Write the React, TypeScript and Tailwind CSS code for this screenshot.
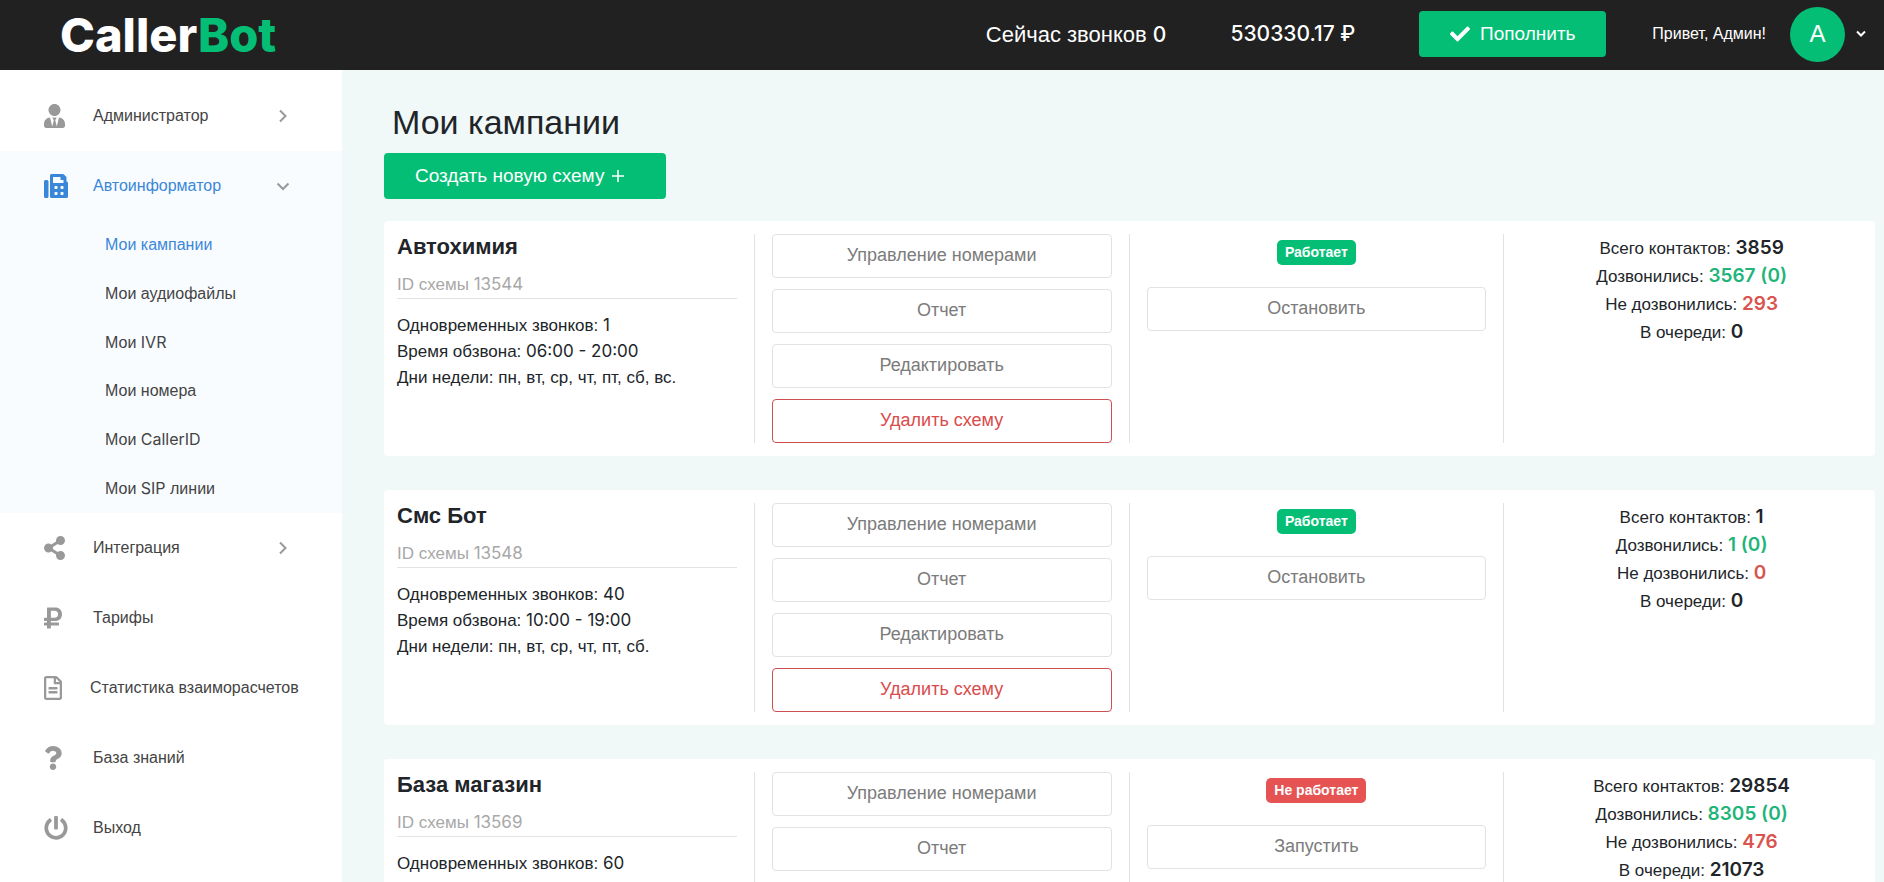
import type { ReactNode } from "react";
import {
  FaCheck,
  FaFax,
  FaPowerOff,
  FaQuestion,
  FaRegFileAlt,
  FaRubleSign,
  FaShareAlt,
  FaUserTie,
} from "react-icons/fa";

type Campaign = {
  name: string;
  id: string;
  calls: string;
  hours: string;
  days: string;
  running: boolean;
  total: string;
  reached: string;
  missed: string;
  queued: string;
};

const campaigns: Campaign[] = [
  {
    name: "Автохимия",
    id: "13544",
    calls: "1",
    hours: "06:00 - 20:00",
    days: "пн, вт, ср, чт, пт, сб, вс.",
    running: true,
    total: "3859",
    reached: "3567 (0)",
    missed: "293",
    queued: "0",
  },
  {
    name: "Смс Бот",
    id: "13548",
    calls: "40",
    hours: "10:00 - 19:00",
    days: "пн, вт, ср, чт, пт, сб.",
    running: true,
    total: "1",
    reached: "1 (0)",
    missed: "0",
    queued: "0",
  },
  {
    name: "База магазин",
    id: "13569",
    calls: "60",
    hours: "10:00 - 19:00",
    days: "пн, вт, ср, чт, пт, сб.",
    running: false,
    total: "29854",
    reached: "8305 (0)",
    missed: "476",
    queued: "21073",
  },
];

const submenu: { label: string; latin?: string; tail?: string }[] = [
  { label: "Мои кампании" },
  { label: "Мои аудиофайлы" },
  { label: "Мои ", latin: "IVR" },
  { label: "Мои номера" },
  { label: "Мои ", latin: "CallerID" },
  { label: "Мои ", latin: "SIP", tail: " линии" },
];

function Latin({ children }: { children: ReactNode }) {
  return <span className="font-['Inter',sans-serif] leading-none">{children}</span>;
}

function Chevron({ open = false }: { open?: boolean }) {
  return (
    <svg viewBox="0 0 14 14" className="ml-auto size-[14px] shrink-0 text-[#999]" fill="none" stroke="currentColor" strokeWidth="2">
      {open ? <path d="M1.5 4.5 7 10l5.5-5.5" /> : <path d="M4 1.5 9.5 7 4 12.5" />}
    </svg>
  );
}

function NavItem({
  icon,
  label,
  wide = false,
  chevron,
  active = false,
}: {
  icon: ReactNode;
  label: string;
  wide?: boolean;
  chevron?: "right" | "down";
  active?: boolean;
}) {
  return (
    <a
      href="#"
      className={`flex h-[70px] items-center pr-[52px] pl-11 ${active ? "text-[#3a87d9]" : "text-[#444]"}`}
    >
      <span className={`flex shrink-0 text-2xl ${wide ? "w-[46px]" : "w-[49px]"} ${active ? "" : "text-[#999]"}`}>{icon}</span>
      <span className="whitespace-nowrap">{label}</span>
      {chevron && <Chevron open={chevron === "down"} />}
    </a>
  );
}

function OutlineButton({ children, danger = false }: { children: ReactNode; danger?: boolean }) {
  return (
    <button
      type="button"
      className={`h-11 w-full rounded border bg-white pb-[2px] text-lg ${
        danger ? "border-[#cf5050] text-[#d94c4c]" : "border-[#e2e2e2] text-[#7b7b7b]"
      }`}
    >
      {children}
    </button>
  );
}

function Stat({ label, value, tone }: { label: string; value: string; tone: string }) {
  return (
    <p>
      {label}: <strong className={`font-['Inter',sans-serif] text-[19px] leading-none font-semibold ${tone}`}>{value}</strong>
    </p>
  );
}

function CampaignCard({ c }: { c: Campaign }) {
  return (
    <article className="rounded bg-white py-[13px]">
      <div className="-mx-1 grid grid-cols-4">
        <div className="border-r border-[#e2e2e2] px-[17px] text-[17px] leading-[26px]">
          <h2 className="text-[22px] font-bold">{c.name}</h2>
          <p className="mt-3 border-b border-[#e2e2e2] text-[#a8a8a8]">
            ID схемы <Latin>{c.id}</Latin>
          </p>
          <div className="mt-[14px]">
            <p>
              Одновременных звонков: <Latin>{c.calls}</Latin>
            </p>
            <p>
              Время обзвона: <Latin>{c.hours}</Latin>
            </p>
            <p>Дни недели: {c.days}</p>
          </div>
        </div>
        <div className="flex flex-col gap-[11px] border-r border-[#e2e2e2] px-[17px]">
          <OutlineButton>Управление номерами</OutlineButton>
          <OutlineButton>Отчет</OutlineButton>
          <OutlineButton>Редактировать</OutlineButton>
          <OutlineButton danger>Удалить схему</OutlineButton>
        </div>
        <div className="flex flex-col items-center border-r border-[#e2e2e2] px-[17px] pt-[6px]">
          <span
            className={`mb-[22px] rounded-[5px] px-2 text-sm leading-[25px] font-bold text-white ${
              c.running ? "bg-[#04be76]" : "bg-[#e55353]"
            }`}
          >
            {c.running ? "Работает" : "Не работает"}
          </span>
          <OutlineButton>{c.running ? "Остановить" : "Запустить"}</OutlineButton>
        </div>
        <div className="px-[17px] pt-px text-center text-[17px] leading-7">
          <Stat label="Всего контактов" value={c.total} tone="text-[#212529]" />
          <Stat label="Дозвонились" value={c.reached} tone="text-[#1fb57a]" />
          <Stat label="Не дозвонились" value={c.missed} tone="text-[#d9534f]" />
          <Stat label="В очереди" value={c.queued} tone="text-[#212529]" />
        </div>
      </div>
    </article>
  );
}

export default function App() {
  return (
    <div className="flex h-screen flex-col bg-[#f0f9f8] font-['Liberation_Sans',Arial,sans-serif] text-[#212529]">
      <header className="flex h-[70px] shrink-0 items-center bg-[#212121] pr-[18px] pb-[2px] pl-[60px] text-white">
        <a href="#" className="font-['Inter',sans-serif] text-[47px] leading-none font-extrabold">
          Caller<span className="text-[#04be76]">Bot</span>
        </a>
        <p className="ml-auto text-[22px] whitespace-nowrap">
          Сейчас звонков <span className="font-['Inter',sans-serif] text-[21px] font-medium">0</span>
        </p>
        <p className="ml-16 font-['Inter',sans-serif] text-[21px] font-medium whitespace-nowrap">530330.17 ₽</p>
        <button type="button" className="ml-16 flex h-[46px] w-[187px] items-center justify-center gap-[10px] rounded bg-[#04be76] text-[19px]">
          <FaCheck className="size-5" />
          Пополнить
        </button>
        <p className="ml-[46px] whitespace-nowrap">Привет, Админ!</p>
        <button type="button" className="ml-6 flex items-center gap-[11px]">
          <span className="flex size-[55px] items-center justify-center rounded-full bg-[#04be76] text-2xl">A</span>
          <svg viewBox="0 0 10 8" className="h-2 w-[10px]" fill="none" stroke="currentColor" strokeWidth="2">
            <path d="m1 1.5 4 4 4-4" />
          </svg>
        </button>
      </header>

      <div className="flex min-h-0 flex-1">
        <nav className="w-[342px] shrink-0 overflow-y-auto bg-white pt-[11px] [scrollbar-width:none]">
          <NavItem icon={<FaUserTie preserveAspectRatio="xMinYMid meet" />} label="Администратор" chevron="right" />
          <div className="bg-[#f9fcff]">
            <NavItem icon={<FaFax />} label="Автоинформатор" chevron="down" active />
            <ul className="flex h-[292px] flex-col">
              {submenu.map((s, i) => (
                <li key={i} className="flex flex-1 items-center pl-[105px]">
                  <a href="#" className={i === 0 ? "text-[#3a87d9]" : "text-[#444]"}>
                    {s.label}
                    {s.latin && <Latin>{s.latin}</Latin>}
                    {s.tail}
                  </a>
                </li>
              ))}
            </ul>
          </div>
          <NavItem icon={<FaShareAlt preserveAspectRatio="xMinYMid meet" />} label="Интеграция" chevron="right" />
          <NavItem icon={<FaRubleSign preserveAspectRatio="xMinYMid meet" />} label="Тарифы" />
          <NavItem icon={<FaRegFileAlt preserveAspectRatio="xMinYMid meet" />} label="Статистика взаиморасчетов" wide />
          <NavItem icon={<FaQuestion preserveAspectRatio="xMinYMid meet" />} label="База знаний" />
          <NavItem icon={<FaPowerOff />} label="Выход" />
        </nav>

        <main className="min-w-0 flex-1 overflow-y-auto pt-8 pr-[9px] pl-[42px] [scrollbar-width:none]">
          <h1 className="pl-2 text-[34px] leading-10">Мои кампании</h1>
          <button type="button" className="mt-[11px] flex h-[46px] w-[282px] items-center gap-2 rounded bg-[#04be76] pl-[31px] text-[19px] text-white">
            Создать новую схему
            <svg viewBox="0 0 12 12" className="size-3" stroke="currentColor" strokeWidth="1.6">
              <path d="M6 0v12M0 6h12" />
            </svg>
          </button>
          <div className="mt-[22px] flex flex-col gap-[34px] pb-[34px]">
            {campaigns.map((c) => (
              <CampaignCard key={c.id} c={c} />
            ))}
          </div>
        </main>
      </div>
    </div>
  );
}
